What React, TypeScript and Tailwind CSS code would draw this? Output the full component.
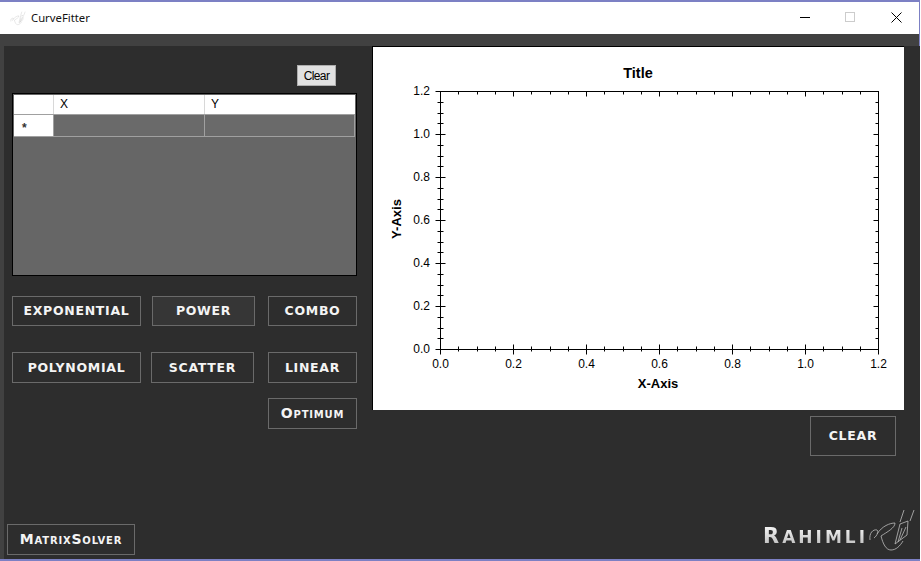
import React from "react";

const btn =
  "flex items-center justify-center border border-[#6a6a6a] text-[#f4f4f4] font-bold [font-family:'DejaVu_Sans',sans-serif]";

function Signature({ className, color, viewBox }: { className: string; color: string; viewBox: string }) {
  return (
    <svg viewBox={viewBox} className={className} fill="none" stroke={color} strokeWidth="0.8">
      <path d="M8 40 C7 33 11 29 15 30 C17 31 15 36 12 38" />
      <path d="M15 34 C20 26 28 23 33 23 C33 28 25 32 19 36 C21 44 24 50 29 50 C34 50 38 46 41 41" />
      <path d="M38 24 L46 21 L45 35 L33 44 Z" />
      <path d="M42 10 L38 22 M52 10 L48 21" />
      <path d="M40 28 L36 42 M44 27 L38 40" />
    </svg>
  );
}

function Chart() {
  const L = 440.5, R = 878.5, T = 91.5, B = 349.5;
  const dx = 73, dy = 43;
  const ticks: number[] = [];
  for (let i = 0; i <= 24; i++) ticks.push(i);
  const lines: React.ReactElement[] = [];
  ticks.forEach((i) => {
    const x = Math.round(L + (i * dx) / 4 - 0.5) + 0.5;
    const y = Math.round(B - (i * dy) / 4 - 0.5) + 0.5;
    const major = i % 4 === 0;
    lines.push(<line key={`xb${i}`} x1={x} x2={x} y1={major ? B - 5 : B - 3} y2={major ? B + 5 : B + 2} />);
    lines.push(<line key={`xt${i}`} x1={x} x2={x} y1={T} y2={major ? T + 5 : T + 3} />);
    lines.push(<line key={`yl${i}`} y1={y} y2={y} x1={major ? L - 5 : L - 3} x2={major ? L + 5 : L + 3} />);
    lines.push(<line key={`yr${i}`} y1={y} y2={y} x1={major ? R - 5 : R - 3} x2={R} />);
  });
  const labels = ["0.0", "0.2", "0.4", "0.6", "0.8", "1.0", "1.2"];
  return (
    <svg viewBox="373 47 531 363" className="block w-[531px] h-[363px] bg-white">
      <rect x={L} y={T} width={R - L} height={B - T} fill="none" stroke="#000" />
      <g stroke="#000">{lines}</g>
      <g fontFamily="'Liberation Sans', sans-serif" fontSize="12" fill="#000">
        {labels.map((t, i) => (
          <text key={`x${t}`} x={L + i * dx} y={368} textAnchor="middle">{t}</text>
        ))}
        {labels.map((t, i) => (
          <text key={`y${t}`} x={430} y={B - i * dy + 3} textAnchor="end">{t}</text>
        ))}
      </g>
      <g fontFamily="'Liberation Sans', sans-serif" fontWeight="700" fill="#000">
        <text x={638} y={78} fontSize="14.5" textAnchor="middle">Title</text>
        <text x={658} y={388} fontSize="13" textAnchor="middle">X-Axis</text>
        <text x={0} y={0} fontSize="13" textAnchor="middle" transform="translate(401 219) rotate(-90)">Y-Axis</text>
      </g>
    </svg>
  );
}

export default function App() {
  return (
    <div className="w-[921px] h-[561px] bg-white overflow-hidden">
      <div className="w-[920px] h-[561px] flex flex-col border-t-2 border-r border-b-2 border-[#7c80c4]">
        <div className="h-[32px] shrink-0 bg-white flex items-center text-[11.3px] text-[#111] [font-family:'Noto_Sans',sans-serif]">
          <Signature className="ml-[10px] w-[16px] h-[15px]" color="#a8a8a8" viewBox="6 8 48 46" />
          <span className="ml-[5px]">CurveFitter</span>
          <div className="ml-auto flex items-center pb-[2px]">
            <svg viewBox="0 0 10 1" className="w-[10px] h-[1px] mr-[35px]"><rect width="10" height="1" fill="#000" /></svg>
            <div className="w-[10px] h-[10px] border border-[#cccccc] mr-[36px]" />
            <svg viewBox="0 0 11 11" className="w-[11px] h-[11px] mr-[17px]" stroke="#000" fill="none"><path d="M0.5 0.5 L10.5 10.5 M10.5 0.5 L0.5 10.5" /></svg>
          </div>
        </div>
        <div className="flex-1 min-h-0 bg-[#414141] pt-[12px] pl-[4px] flex">
          <div className="flex-1 bg-[#2d2d2d] flex">
            <div className="w-[368px] shrink-0 flex flex-col">
              <div className="flex justify-end pr-[36px] pt-[19px]">
                <button className="w-[39px] h-[21px] bg-[#e1e1e1] border border-[#adadad] text-[12px] tracking-[-0.6px] text-black [font-family:'Liberation_Sans',sans-serif]">
                  Clear
                </button>
              </div>
              <div className="ml-[8px] mt-[7px] w-[345px] h-[183px] border border-black bg-[#666666] p-px text-[12px] text-black [font-family:'Liberation_Sans',sans-serif]">
                <div className="flex h-[20px] bg-white border-b border-[#a0a0a0]">
                  <div className="w-[40px] border-r border-[#d8d8d8]" />
                  <div className="w-[151px] pl-[6px] border-r border-[#d8d8d8] leading-[19px]">X</div>
                  <div className="flex-1 pl-[6px] leading-[19px]">Y</div>
                </div>
                <div className="flex h-[22px] border-b border-[#a0a0a0]">
                  <div className="w-[40px] bg-white border-r border-[#a0a0a0] pl-[8px] leading-[27px] font-bold text-[#333]">*</div>
                  <div className="w-[151px] border-r border-[#a0a0a0] bg-[#6a6a6a]" />
                  <div className="flex-1 border-r border-[#a0a0a0] bg-[#6a6a6a]" />
                </div>
              </div>
              <div className="ml-[8px] mt-[20px] flex text-[12.5px] tracking-[0.7px]">
                <div className={`${btn} w-[129px] h-[30px]`}>EXPONENTIAL</div>
                <div className={`${btn} w-[103px] h-[30px] ml-[11px] bg-[#363636]`}>POWER</div>
                <div className={`${btn} w-[89px] h-[30px] ml-[13px]`}>COMBO</div>
              </div>
              <div className="ml-[8px] mt-[26px] flex text-[12.5px] tracking-[0.7px]">
                <div className={`${btn} w-[129px] h-[31px] pt-px`}>POLYNOMIAL</div>
                <div className={`${btn} w-[103px] h-[31px] ml-[10px] pt-px`}>SCATTER</div>
                <div className={`${btn} w-[89px] h-[31px] ml-[14px] pt-px`}>LINEAR</div>
              </div>
              <div className="ml-[264px] mt-[15px]">
                <div className={`${btn} w-[89px] h-[31px] text-[14px] tracking-[0.8px] [font-variant:small-caps]`}>Optimum</div>
              </div>
              <div className={`${btn} ml-[3px] mt-auto mb-[4px] w-[128px] h-[31px] text-[14px] tracking-[0.8px] [font-variant:small-caps]`}>MatrixSolver</div>
            </div>
            <div className="flex-1 flex flex-col">
              <div className="border-t border-l border-black w-[532px]">
                <Chart />
              </div>
              <div className={`${btn} ml-[438px] mt-[6px] w-[86px] h-[40px] text-[12.5px] tracking-[0.7px]`}>CLEAR</div>
              <div className="mt-auto ml-[391px] flex items-end">
                <span className="mb-[8px] tracking-[3px] leading-[26px] font-bold [font-family:'DejaVu_Sans',sans-serif] bg-gradient-to-b from-white to-[#b0b0b0] bg-clip-text text-transparent">
                  <span className="text-[21px]">R</span>
                  <span className="text-[17px] uppercase">ahimli</span>
                </span>
                <Signature className="w-[58px] h-[59px] -ml-[6px]" color="#bdbdbd" viewBox="0 0 58 59" />
              </div>
            </div>
          </div>
        </div>
      </div>
    </div>
  );
}
